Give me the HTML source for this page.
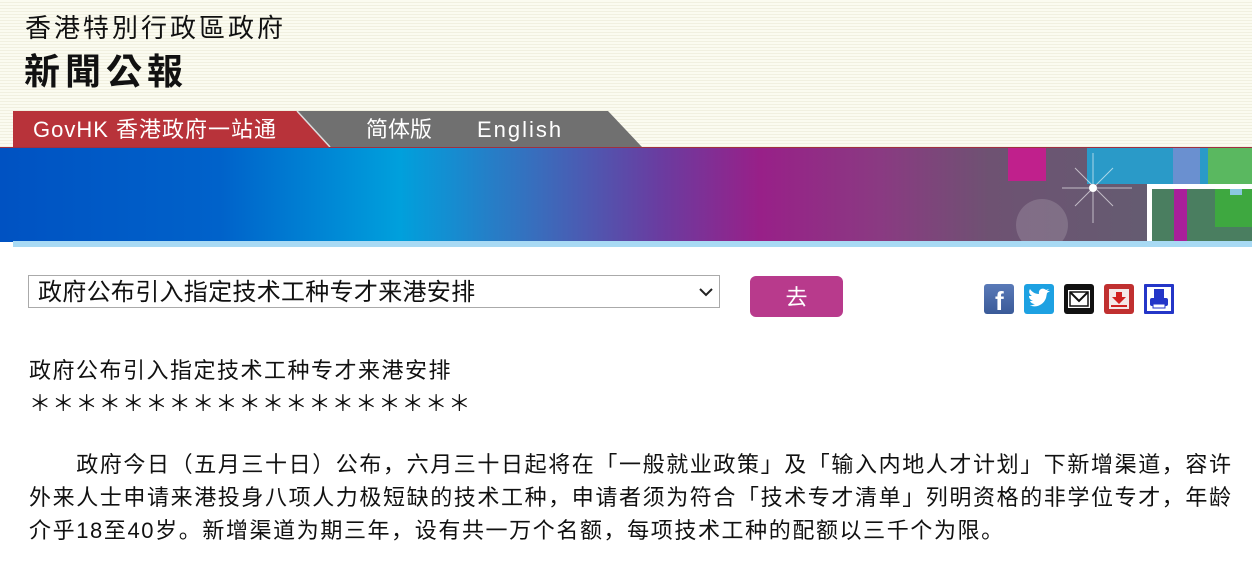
<!DOCTYPE html>
<html><head><meta charset="utf-8"><style>
body{margin:0;width:1252px;height:568px;overflow:hidden;background:#fff;font-family:"Liberation Sans","Noto Sans CJK SC",sans-serif;position:relative}
.hdr{position:absolute;left:0;top:0;width:1252px;height:147px;background:repeating-linear-gradient(#fbfbf0 0 2px,#f1f0e0 2px 3px)}
.t1{position:absolute;left:25px;top:8px;font-size:26px;letter-spacing:3px;font-family:"Liberation Sans","Noto Sans CJK TC",sans-serif;color:#111}
.t2{position:absolute;left:24px;top:43px;font-size:36px;letter-spacing:5px;font-weight:bold;font-family:"Liberation Sans","Noto Sans CJK TC",sans-serif;color:#111}
.tab{position:absolute;top:111px;height:36px;color:#fff;font-size:22px;line-height:38px}
.banner{position:absolute;left:0;top:147px;width:1252px;height:94px;background:linear-gradient(90deg,#0052c2 0,#0062ca 220px,#00a0dc 400px,#3a6cbc 540px,#6a3ca0 660px,#982088 760px,#8a3a82 880px,#6e5272 990px,#5e6270 1252px);border-top:1px solid #a03040}
.strip{position:absolute;left:13px;top:241px;width:1239px;height:6px;background:#a8daf4}
.sel{position:absolute;left:28px;top:275px;width:692px;height:33px;border:1px solid #aaa;font-size:24px;line-height:33px;letter-spacing:0.3px;padding-left:9px;box-sizing:border-box;color:#111}
.btn{position:absolute;left:750px;top:276px;width:93px;height:41px;background:#b83a8c;border-radius:6px;color:#fff;font-size:22px;text-align:center;line-height:43px}
.ic{position:absolute;top:284px;width:30px;height:30px;border-radius:3px}
.txt{position:absolute;left:29px;font-size:22px;color:#111}
</style></head><body>
<div class="hdr"></div>
<div class="t1">香港特別行政區政府</div>
<div class="t2">新聞公報</div>
<svg style="position:absolute;left:0;top:111px" width="650" height="37">
<polygon points="297,0 608,0 642,36 330,36" fill="#707070"/>
<polygon points="13,0 297,0 330,36 13,36" fill="#b8333a"/>
<line x1="297" y1="0" x2="330" y2="36" stroke="#ddd" stroke-width="1.5"/>
</svg>
<div class="tab" style="left:33px;letter-spacing:1px;font-size:22px">GovHK 香港政府一站通</div>
<div class="tab" style="left:366px;letter-spacing:0px">简体版</div>
<div class="tab" style="left:477px;letter-spacing:2px">English</div>
<div class="banner">
<svg style="position:absolute;right:0;top:0" width="252" height="94">
<rect x="87" y="0" width="165" height="36" fill="#2a9ac8"/>
<rect x="173" y="0" width="27" height="36" fill="#6a90d0"/>
<rect x="208" y="0" width="44" height="36" fill="#5ab860"/>
<rect x="147" y="36" width="105" height="58" fill="#4a7e60"/>
<rect x="147" y="36" width="105" height="5" fill="#fff"/><rect x="147" y="36" width="5" height="58" fill="#fff"/>
<rect x="174" y="41" width="13" height="53" fill="#a8209a"/>
<rect x="215" y="41" width="37" height="38" fill="#3ea840"/>
<rect x="230" y="41" width="12" height="6" fill="#8ac8e0"/>
<rect x="8" y="0" width="38" height="33" fill="#c0208c"/>
<circle cx="42" cy="77" r="26" fill="#ffffff" opacity=".15"/>
<path d="M93 5v70M62 40h70M75 20l38 38M113 20l-38 38" stroke="#fff" stroke-width="1" opacity=".6"/>
<circle cx="93" cy="40" r="4" fill="#fff"/>
</svg>
</div>
<div class="strip"></div>
<div class="sel">政府公布引入指定技术工种专才来港安排<svg style="position:absolute;right:6px;top:11px" width="14" height="10"><path d="M1 2l6 6 6-6" stroke="#222" stroke-width="2" fill="none"/></svg></div>
<div class="btn">去</div>
<div class="ic" style="left:984px;background:linear-gradient(#5a7ab8,#3a5a98)"><span style="position:absolute;left:11px;top:2px;color:#fff;font-weight:bold;font-size:26px">f</span></div>
<div class="ic" style="left:1024px;background:#1da1e2"><svg width="30" height="30"><path d="M5 21c6 3 14 1 17-7l1-5 3-2-3 0 2-2-3 1c-3-3-8-1-7 4-4 0-7-2-9-5-2 3 0 6 2 7l-3 0c0 3 2 4 4 5h-3c1 2 3 3 5 3-2 1-4 2-6 1z" fill="#fff"/></svg></div>
<div class="ic" style="left:1064px;background:#111"><svg width="30" height="30"><rect x="4" y="6" width="22" height="18" fill="#fff"/><rect x="6" y="8" width="18" height="14" fill="none" stroke="#111" stroke-width="1.5"/><path d="M6 8l9 9 9-9" stroke="#111" stroke-width="2" fill="none"/></svg></div>
<div class="ic" style="left:1104px;background:#c03030"><svg width="30" height="30"><rect x="5" y="5" width="20" height="20" fill="#f4e8e8"/><path d="M12 8h6v5h4l-7 7-7-7h4z" fill="#d02020"/><rect x="7" y="21" width="16" height="2" fill="#d02020"/></svg></div>
<div class="ic" style="left:1144px;background:#2436c8;border-radius:1px"><svg width="30" height="30"><rect x="3" y="3" width="24" height="24" fill="#fff"/><rect x="10" y="5" width="10" height="9" fill="#2436c8"/><rect x="6" y="14" width="18" height="8" rx="2" fill="#2436c8"/><rect x="9" y="20" width="12" height="4" fill="#fff" stroke="#2436c8"/></svg></div>
<div class="txt" style="top:353px;letter-spacing:1.5px">政府公布引入指定技术工种专才来港安排</div>
<div class="txt" style="top:386px;letter-spacing:1.3px">＊＊＊＊＊＊＊＊＊＊＊＊＊＊＊＊＊＊＊</div>
<div class="txt" style="top:448px;width:1210px;line-height:33px;letter-spacing:1.6px">　　政府今日（五月三十日）公布，六月三十日起将在「一般就业政策」及「输入内地人才计划」下新增渠道，容许外来人士申请来港投身八项人力极短缺的技术工种，申请者须为符合「技术专才清单」列明资格的非学位专才，年龄介乎18至40岁。新增渠道为期三年，设有共一万个名额，每项技术工种的配额以三千个为限。</div>
</body></html>
